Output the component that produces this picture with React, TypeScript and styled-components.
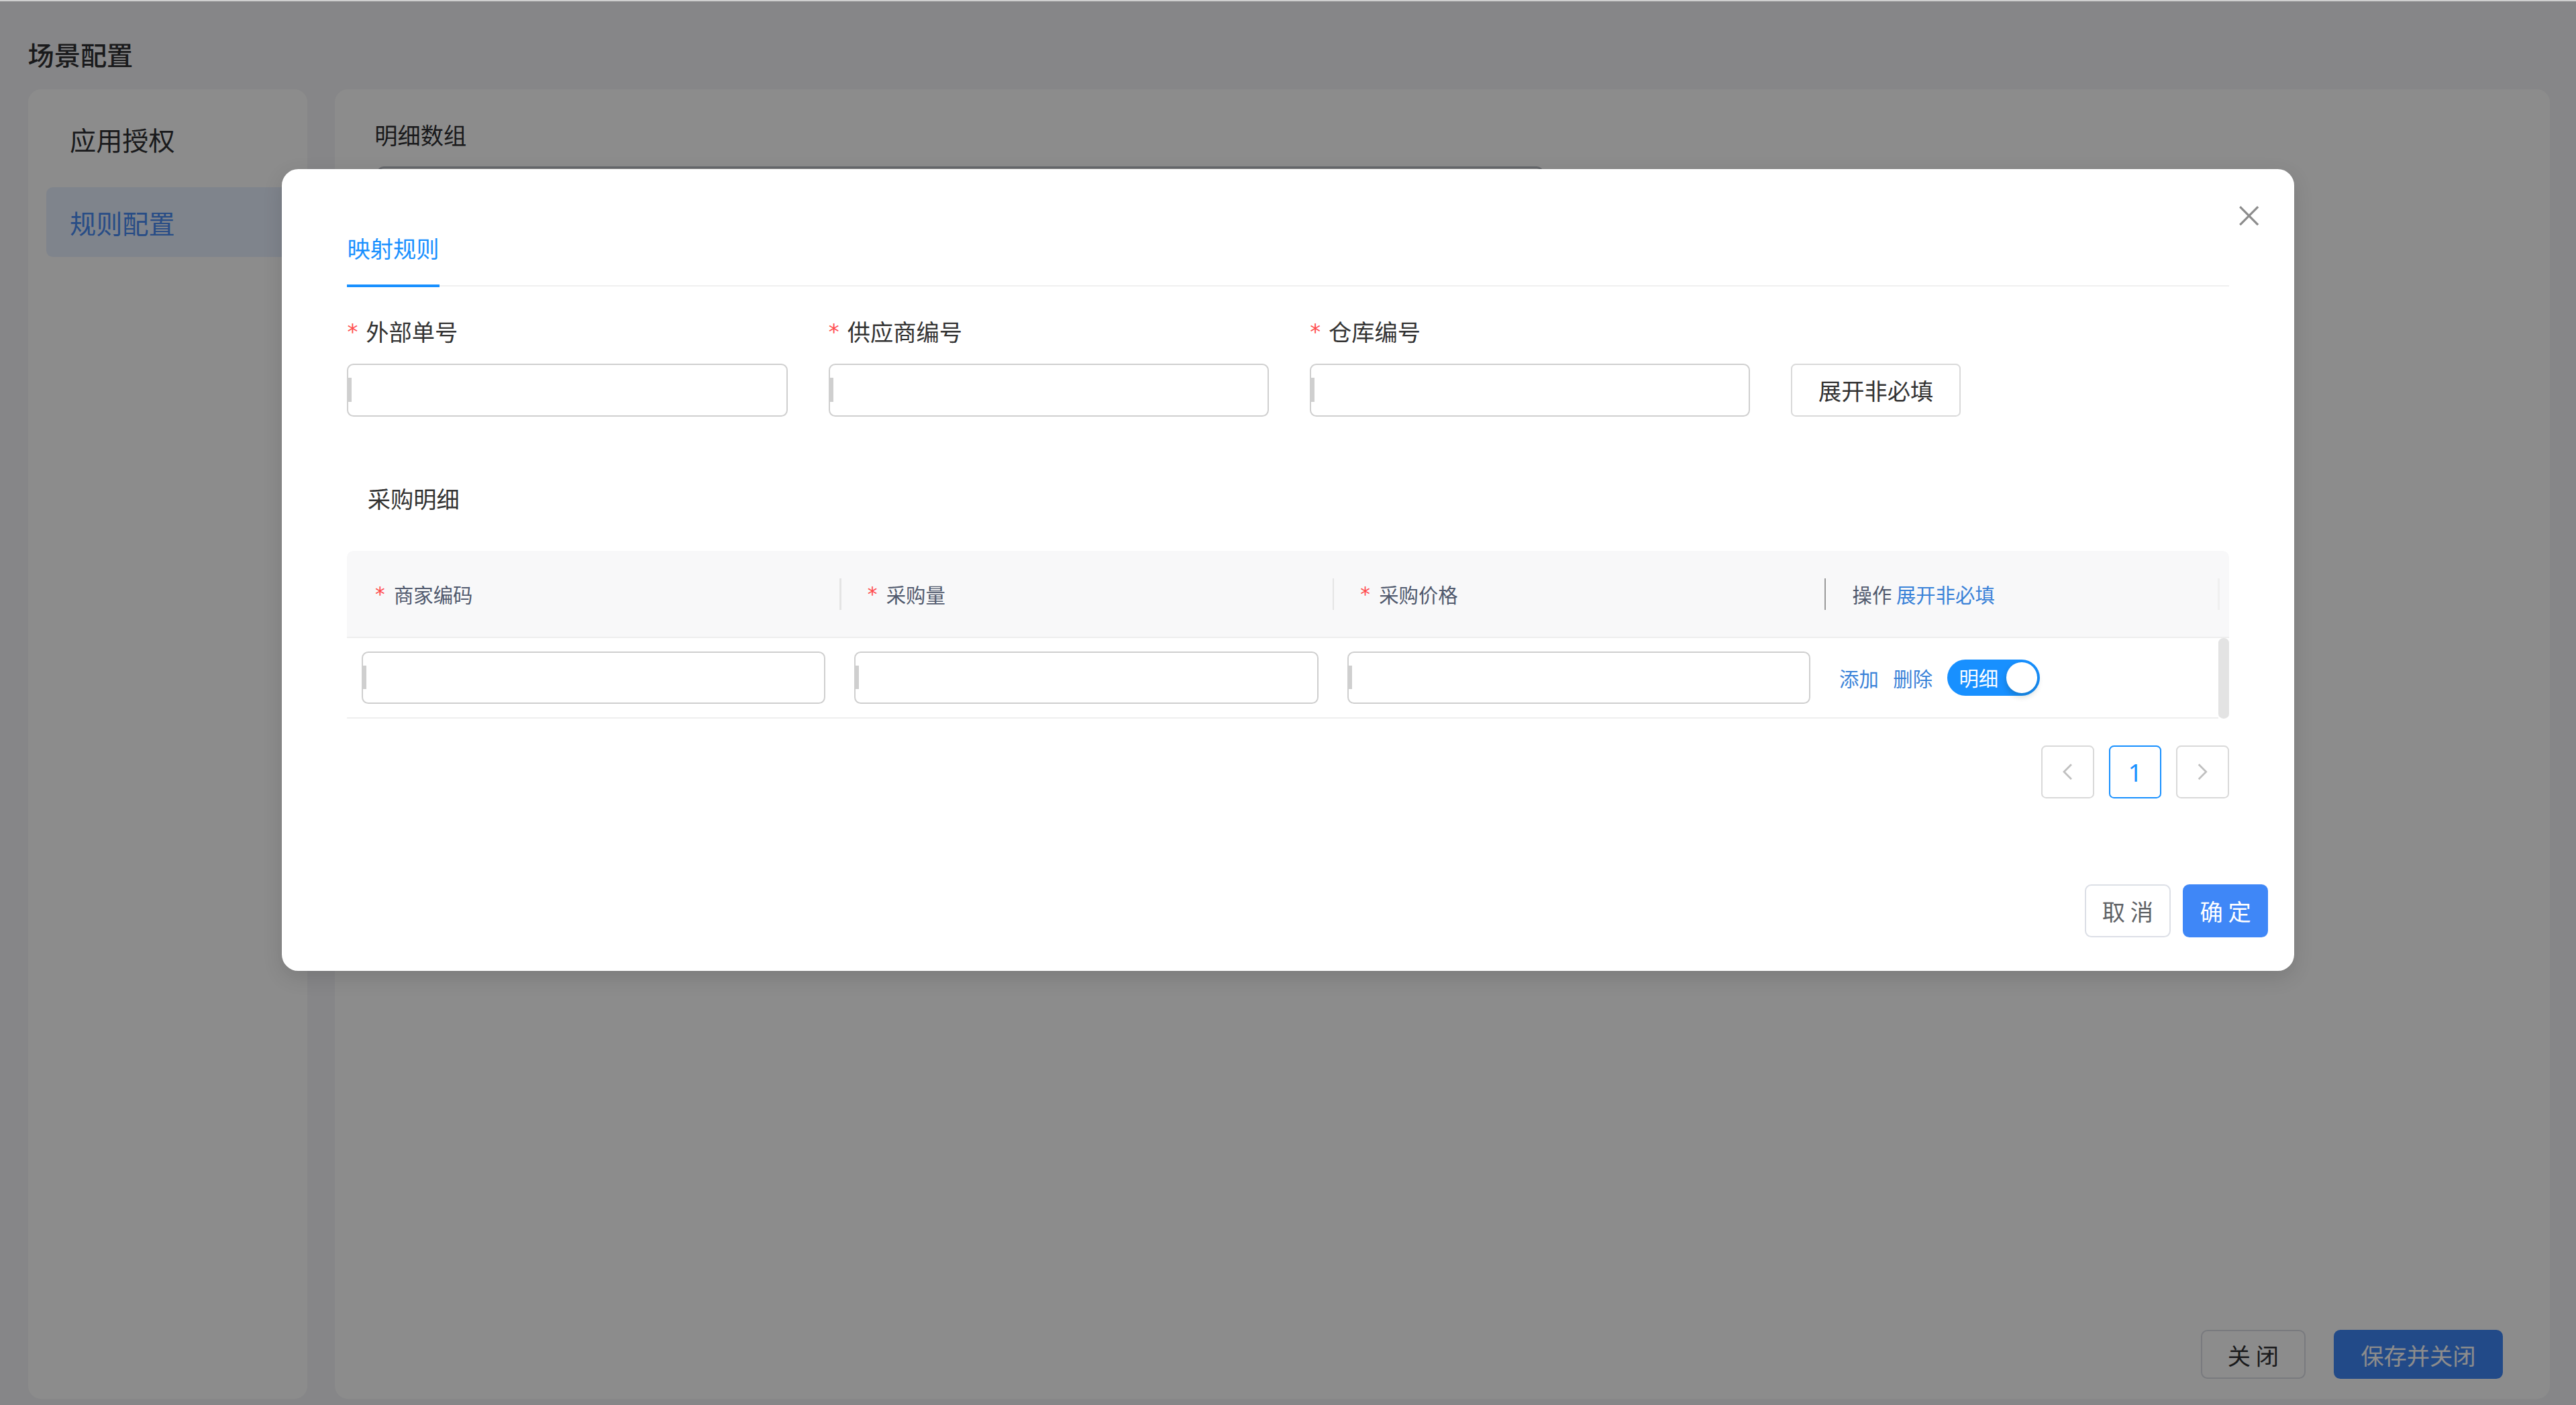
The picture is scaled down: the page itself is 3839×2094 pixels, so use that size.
import React from "react";
import styled, { createGlobalStyle } from "styled-components";

const SCALE = 3839 / 1568;

const GlobalStyle = createGlobalStyle`
  html, body {
    margin: 0;
    padding: 0;
    background: #868788;
    overflow: hidden;
  }
  * { box-sizing: border-box; }
`;

const Viewport = styled.div`
  zoom: ${SCALE};
  position: relative;
  width: 1568px;
  height: 855.3px;
  overflow: hidden;
  background: #f4f5f7;
  font-family: "Noto Sans CJK SC", "Noto Sans", sans-serif;
  color: #303133;
`;

/* ---------- underlying page ---------- */

const Page = styled.div`
  display: flex;
  flex-direction: column;
  height: 100%;
  padding: 21px 16px 3.6px 17px;
`;

const PageTitle = styled.h1`
  margin: 0 0 9.5px;
  font-size: 16px;
  line-height: 24px;
  font-weight: 500;
  color: #303133;
`;

const Workspace = styled.div`
  flex: 1;
  min-height: 0;
  display: flex;
  gap: 17px;
`;

const SideMenu = styled.nav`
  width: 170px;
  background: #fff;
  border-radius: 8px;
  padding: 8.7px 11px;
  display: flex;
  flex-direction: column;
  gap: 8px;
`;

const MenuItem = styled.div<{ $active?: boolean }>`
  height: 42.6px;
  display: flex;
  align-items: center;
  padding-left: 14.5px;
  border-radius: 4px;
  font-size: 16px;
  color: ${(p) => (p.$active ? "#4a8cf5" : "#303133")};
  background: ${(p) => (p.$active ? "#e8f1ff" : "transparent")};
`;

const MainPanel = styled.section`
  flex: 1;
  background: #fff;
  border-radius: 8px;
  padding: 16.5px 28.5px 12.2px 24px;
  display: flex;
  flex-direction: column;
`;

const SectionTitle = styled.div`
  font-size: 14px;
  line-height: 22px;
  color: #303133;
  margin-bottom: 8.5px;
`;

const DetailBox = styled.div`
  width: 710px;
  height: 320px;
  margin-left: 1.6px;
  border: 1.5px solid #b8bcc4;
  border-radius: 4px;
`;

const PanelFooter = styled.div`
  margin-top: auto;
  display: flex;
  justify-content: flex-end;
  gap: 17px;
`;

const PanelButton = styled.button<{ $primary?: boolean; $w: number }>`
  width: ${(p) => p.$w}px;
  height: 30px;
  padding: 0;
  border-radius: 4px;
  font-family: inherit;
  font-size: 14px;
  border: 1px solid ${(p) => (p.$primary ? "#3f87f7" : "#dcdfe6")};
  background: ${(p) => (p.$primary ? "#3f87f7" : "#fff")};
  color: ${(p) => (p.$primary ? "#fff" : "#303133")};
`;

/* ---------- modal ---------- */

const Overlay = styled.div`
  position: absolute;
  inset: 0;
  background: rgba(0, 0, 0, 0.45);
  border-top: 1px solid #cfcfcf;
  display: flex;
  justify-content: center;
  align-items: flex-start;
  padding-top: 102.2px;
`;

const Modal = styled.div`
  position: relative;
  width: 1225.3px;
  height: 488px;
  background: #fff;
  border-radius: 10px;
  display: flex;
  flex-direction: column;
  box-shadow: 0 4px 12px rgba(0, 0, 0, 0.12);
`;

const CloseButton = styled.button`
  position: absolute;
  top: 22.2px;
  right: 21.6px;
  width: 12px;
  height: 12px;
  padding: 0;
  border: 0;
  background: none;
  color: #8c8c8c;
  display: flex;
  cursor: pointer;
`;

const ModalBody = styled.div`
  padding: 37px 40px 0;
  display: flex;
  flex-direction: column;
`;

const TabBar = styled.div`
  display: flex;
  border-bottom: 1px solid #f0f0f0;
`;

const Tab = styled.div`
  font-size: 14px;
  line-height: 22px;
  padding-bottom: 11px;
  margin-bottom: -1px;
  color: #1890ff;
  border-bottom: 2px solid #1890ff;
`;

const FormRow = styled.div`
  margin-top: 16px;
  display: flex;
  align-items: flex-end;
  gap: 25px;
`;

const FormItem = styled.div`
  width: 268px;
  display: flex;
  flex-direction: column;
  gap: 9px;
`;

const FieldLabel = styled.label`
  display: flex;
  align-items: center;
  height: 22px;
  font-size: 14px;
  color: #333;
`;

const RequiredMark = styled.span<{ $size?: number }>`
  display: inline-block;
  width: 7.4px;
  margin-right: 4px;
  color: #ff4d4f;
  font-family: "DejaVu Sans", sans-serif;
  font-size: ${(p) => p.$size ?? 12}px;
  line-height: 1;
  transform: translateY(1px);
`;

const TextInput = styled.div`
  position: relative;
  width: 100%;
  height: 32px;
  border: 1px solid #cfcfcf;
  border-radius: 4px;
  background: #fff;

  &::before {
    content: "";
    position: absolute;
    left: 0;
    top: 7.8px;
    width: 2px;
    height: 14.5px;
    background: #cfcfcf;
  }
`;

const PlainButton = styled.button`
  width: 103px;
  height: 32px;
  padding: 0;
  border: 1px solid #d9d9d9;
  border-radius: 3px;
  background: #fff;
  font-family: inherit;
  font-size: 14px;
  color: #333;
`;

const SubTitle = styled.div`
  margin: 39px 0 0 12.4px;
  font-size: 14px;
  line-height: 22px;
  color: #333;
`;

const Table = styled.div`
  margin-top: 21px;
  display: flex;
  flex-direction: column;
`;

const TableHead = styled.div`
  display: flex;
  height: 53px;
  background: #f8f8f9;
  border-bottom: 1px solid #eeeeee;
  border-radius: 4px 4px 0 0;
`;

const HeadCell = styled.div<{ $w?: number; $divider?: "light" | "dark" | "faint" }>`
  position: relative;
  ${(p) => (p.$w ? `width: ${p.$w}px; flex: none;` : "flex: 1;")}
  display: flex;
  align-items: center;
  padding-left: 17px;
  font-size: 12px;
  color: #515a6e;
  white-space: nowrap;

  &::before {
    content: "";
    display: ${(p) => (p.$divider ? "block" : "none")};
    position: absolute;
    left: 0;
    top: 16.5px;
    width: 1px;
    height: 19.5px;
    background: ${(p) =>
      p.$divider === "dark" ? "#9a9a9a" : p.$divider === "faint" ? "#f0f0f0" : "#e4e4e4"};
  }
`;

const HeadLink = styled.span`
  color: #3a82d8;
`;

const TableBody = styled.div`
  display: flex;
`;

const BodyRow = styled.div`
  flex: 1;
  display: flex;
  height: 49px;
  border-bottom: 1px solid #eeeeee;
`;

const BodyCell = styled.div<{ $w?: number }>`
  ${(p) => (p.$w ? `width: ${p.$w}px; flex: none;` : "flex: 1;")}
  display: flex;
  align-items: center;
  gap: 8.8px;
  padding: 0 8.5px 0 9px;
`;

const ScrollTrack = styled.div`
  width: 6.3px;
  height: 49px;
  border-radius: 3px;
  background: #e3e3e3;
`;

const LinkText = styled.a`
  font-size: 12px;
  line-height: 18px;
  color: #3a82d8;
  cursor: pointer;
`;

const Switch = styled.span`
  display: inline-flex;
  align-items: center;
  justify-content: space-between;
  width: 56.7px;
  height: 22.4px;
  padding: 0 2px 0 7.3px;
  border-radius: 11.2px;
  background: #1890ff;
`;

const SwitchText = styled.span`
  font-size: 12px;
  line-height: 1;
  color: #fff;
`;

const SwitchKnob = styled.span`
  width: 18.6px;
  height: 18.6px;
  border-radius: 50%;
  background: #fff;
  box-shadow: 0 2px 4px rgba(0, 35, 11, 0.2);
`;

const Pagination = styled.div`
  margin-top: 16.5px;
  display: flex;
  justify-content: flex-end;
  gap: 9px;
`;

const PageButton = styled.button<{ $active?: boolean }>`
  width: 32px;
  height: 32px;
  padding: 0;
  display: flex;
  align-items: center;
  justify-content: center;
  border: 1px solid ${(p) => (p.$active ? "#1890ff" : "#d9d9d9")};
  border-radius: 3px;
  background: #fff;
  font-family: "Noto Sans", sans-serif;
  font-size: 15px;
  color: ${(p) => (p.$active ? "#1890ff" : "#bfbfbf")};
`;

const ModalFooter = styled.div`
  margin-top: auto;
  display: flex;
  justify-content: flex-end;
  gap: 7.5px;
  padding: 0 16px 20.6px 0;
`;

const FooterButton = styled.button<{ $primary?: boolean }>`
  width: 52px;
  height: 32px;
  padding: 0;
  border-radius: 4px;
  font-family: inherit;
  font-size: 14px;
  border: 1px solid ${(p) => (p.$primary ? "#3f87f7" : "#dcdfe6")};
  background: ${(p) => (p.$primary ? "#3f87f7" : "#fff")};
  color: ${(p) => (p.$primary ? "#fff" : "#606266")};
`;

const CloseIcon = () => (
  <svg width="12" height="12" viewBox="0 0 12 12" fill="none">
    <path d="M0.5 0.5 L11.5 11.5 M11.5 0.5 L0.5 11.5" stroke="currentColor" strokeWidth="1.3" />
  </svg>
);

const Chevron = ({ dir }: { dir: "left" | "right" }) => (
  <svg width="6" height="10" viewBox="0 0 6 10" fill="none">
    <path
      d={dir === "left" ? "M5.3 0.5 L0.8 5 L5.3 9.5" : "M0.7 0.5 L5.2 5 L0.7 9.5"}
      stroke="currentColor"
      strokeWidth="1.1"
    />
  </svg>
);

const formFields = ["外部单号", "供应商编号", "仓库编号"];

const columns: { title: string; w: number; divider?: "light" | "dark" }[] = [
  { title: "商家编码", w: 299.7 },
  { title: "采购量", w: 300, divider: "light" },
  { title: "采购价格", w: 299.5, divider: "light" },
];

export default function App() {
  return (
    <Viewport>
      <GlobalStyle />
      <Page>
        <PageTitle>场景配置</PageTitle>
        <Workspace>
          <SideMenu>
            <MenuItem>应用授权</MenuItem>
            <MenuItem $active>规则配置</MenuItem>
          </SideMenu>
          <MainPanel>
            <SectionTitle>明细数组</SectionTitle>
            <DetailBox />
            <PanelFooter>
              <PanelButton $w={64}>关 闭</PanelButton>
              <PanelButton $w={103} $primary>
                保存并关闭
              </PanelButton>
            </PanelFooter>
          </MainPanel>
        </Workspace>
      </Page>

      <Overlay>
        <Modal>
          <CloseButton aria-label="close">
            <CloseIcon />
          </CloseButton>
          <ModalBody>
            <TabBar>
              <Tab>映射规则</Tab>
            </TabBar>

            <FormRow>
              {formFields.map((f) => (
                <FormItem key={f}>
                  <FieldLabel>
                    <RequiredMark $size={13}>*</RequiredMark>
                    {f}
                  </FieldLabel>
                  <TextInput />
                </FormItem>
              ))}
              <PlainButton>展开非必填</PlainButton>
            </FormRow>

            <SubTitle>采购明细</SubTitle>

            <Table>
              <TableHead>
                {columns.map((c) => (
                  <HeadCell key={c.title} $w={c.w} $divider={c.divider}>
                    <RequiredMark $size={12}>*</RequiredMark>
                    {c.title}
                  </HeadCell>
                ))}
                <HeadCell $w={239.5} $divider="dark">
                  操作&nbsp;<HeadLink>展开非必填</HeadLink>
                </HeadCell>
                <HeadCell $divider="faint" />
              </TableHead>
              <TableBody>
                <BodyRow>
                  {columns.map((c) => (
                    <BodyCell key={c.title} $w={c.w}>
                      <TextInput />
                    </BodyCell>
                  ))}
                  <BodyCell>
                    <LinkText>添加</LinkText>
                    <LinkText>删除</LinkText>
                    <Switch>
                      <SwitchText>明细</SwitchText>
                      <SwitchKnob />
                    </Switch>
                  </BodyCell>
                </BodyRow>
                <ScrollTrack />
              </TableBody>
            </Table>

            <Pagination>
              <PageButton aria-label="prev">
                <Chevron dir="left" />
              </PageButton>
              <PageButton $active>1</PageButton>
              <PageButton aria-label="next">
                <Chevron dir="right" />
              </PageButton>
            </Pagination>
          </ModalBody>

          <ModalFooter>
            <FooterButton>取 消</FooterButton>
            <FooterButton $primary>确 定</FooterButton>
          </ModalFooter>
        </Modal>
      </Overlay>
    </Viewport>
  );
}
